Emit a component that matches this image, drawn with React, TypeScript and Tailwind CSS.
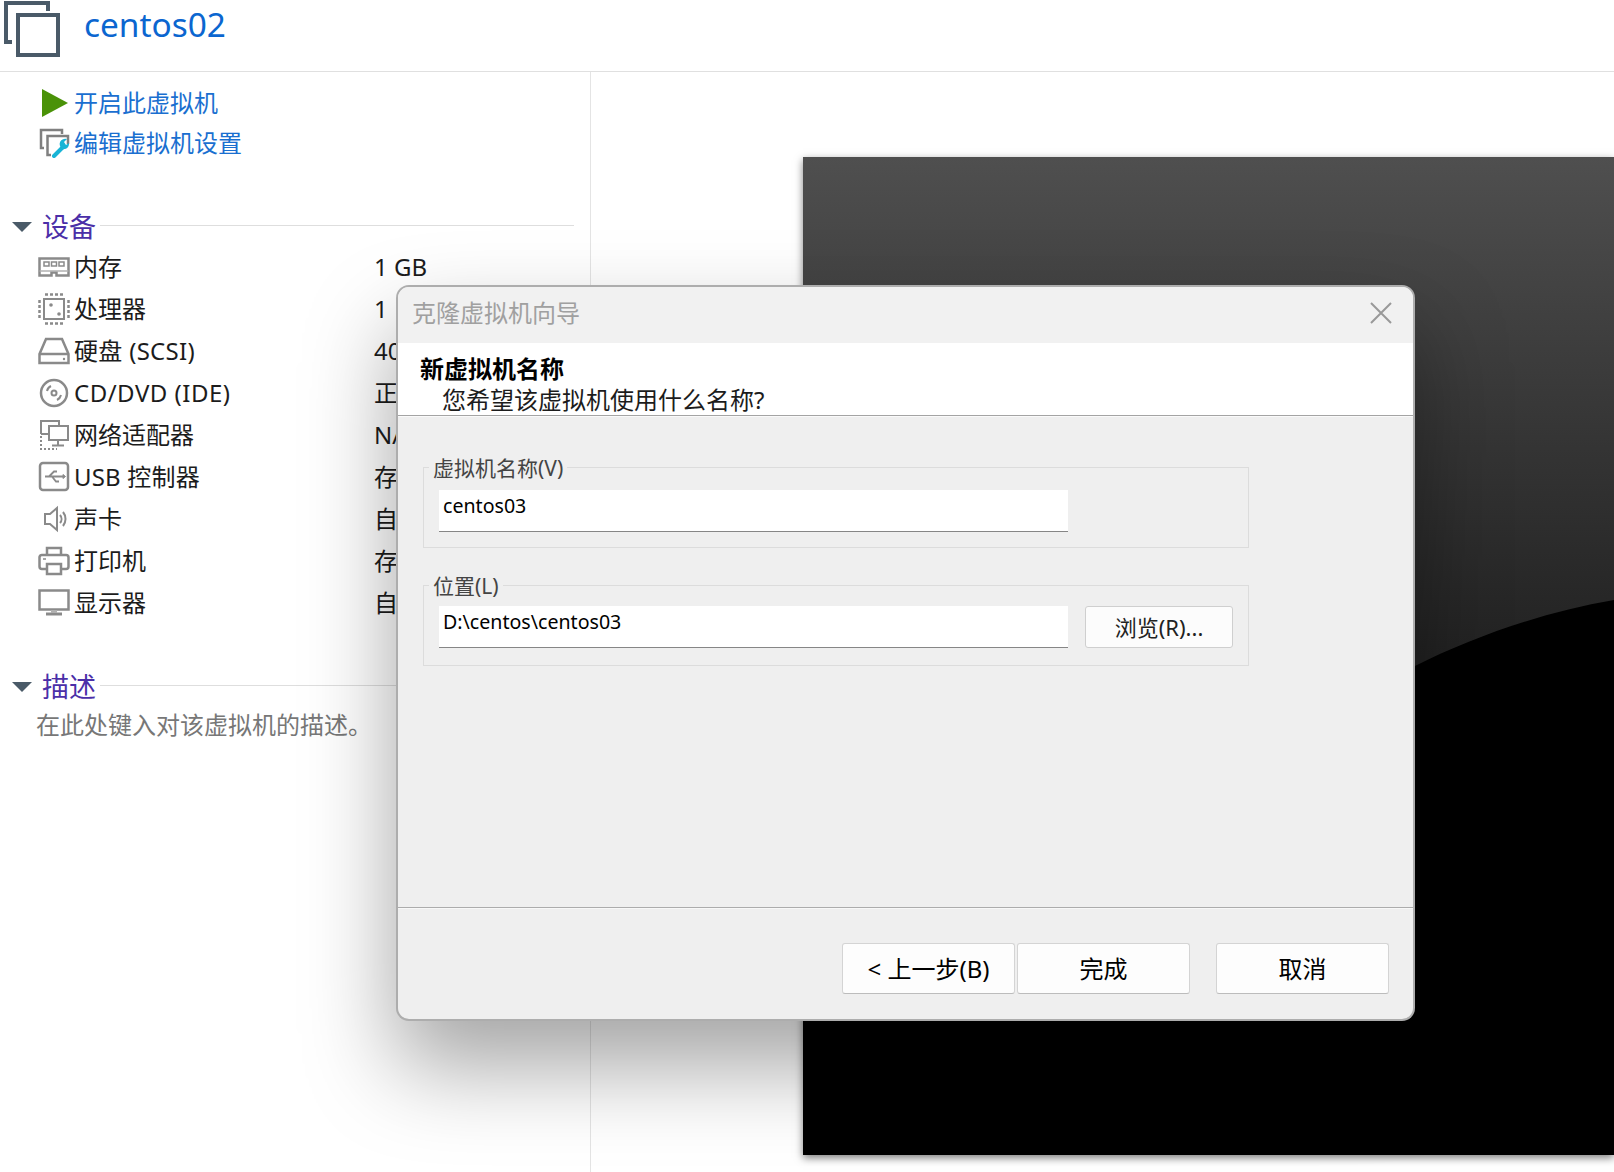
import type { ReactNode } from "react";

const FONT = "font-['Noto_Sans','Noto_Sans_CJK_SC',sans-serif]";

function Ico({ children }: { children: ReactNode }) {
  return (
    <svg width={32} height={32} viewBox="0 0 32 32" fill="none" stroke="#8a8a8a" strokeWidth={2.500}>
      {children}
    </svg>
  );
}

const devices: { label: string; value: string; tracking?: string; icon: ReactNode }[] = [
  {
    label: "内存",
    value: "1 GB",
    icon: (
      <Ico>
        <path d="M1.500 7.500h29v17h-12v-3h-5v3h-12z" />
        <path d="M6 11h5v4H6zM13.500 11h5v4h-5zM21 11h5v4h-5z" strokeWidth={1.500} />
        <path d="M1.500 20h29" strokeWidth={1.500} stroke="#b0b0b0" />
      </Ico>
    ),
  },
  {
    label: "处理器",
    value: "1",
    icon: (
      <Ico>
        <rect x={6} y={6} width={20} height={20} strokeWidth={2} />
        <path d="M7 1.500h18M7 30.500h18M1.500 7v18M30.500 7v18" strokeDasharray="3 2" />
        <circle cx={13} cy={12} r={1.800} fill="#8a8a8a" stroke="none" />
        <circle cx={21} cy={21} r={1.800} fill="#8a8a8a" stroke="none" />
      </Ico>
    ),
  },
  {
    label: "硬盘 (SCSI)",
    value: "40 GB",
    tracking: "tracking-[0.3px]",
    icon: (
      <Ico>
        <path d="M8 4h16l6.500 15v9h-29v-9zM1.500 19h29" />
        <circle cx={26} cy={24} r={1.200} fill="#8a8a8a" stroke="none" />
      </Ico>
    ),
  },
  {
    label: "CD/DVD (IDE)",
    value: "正在使用文件",
    tracking: "tracking-[0.5px]",
    icon: (
      <Ico>
        <circle cx={16} cy={16} r={13} />
        <circle cx={16} cy={16} r={2.500} strokeWidth={2} />
        <path d="M9 14a7.500 7.500 0 0 1 4-5M23 18a7.500 7.500 0 0 1-4 5" strokeWidth={2} />
      </Ico>
    ),
  },
  {
    label: "网络适配器",
    value: "NAT",
    icon: (
      <Ico>
        <path d="M3 15V2h18v5" strokeWidth={2} />
        <path d="M3 15h8" strokeWidth={2} />
        <rect x={11} y={7} width={19} height={14} strokeWidth={2} />
        <path d="M20 21v5M14 26.500h12" strokeWidth={2} />
        <path d="M3 17v13h16" strokeWidth={2} strokeDasharray="2 2" />
      </Ico>
    ),
  },
  {
    label: "USB 控制器",
    value: "存在",
    tracking: "tracking-[0.2px]",
    icon: (
      <Ico>
        <rect x={2} y={2} width={28} height={27} rx={3} />
        <path d="M7 15.500h18M11 15.500l5-5h3M14 15.500l4 5h3" strokeWidth={1.800} />
        <path d="M25 13.500v4l2.500-2z" fill="#8a8a8a" strokeWidth={1} />
      </Ico>
    ),
  },
  {
    label: "声卡",
    value: "自动检测",
    icon: (
      <Ico>
        <path d="M7 11h5l7-6v22l-7-6H7z" strokeWidth={2} />
        <path d="M22 12a6 6 0 0 1 0 8M25 9a11 11 0 0 1 0 14" strokeWidth={2} />
      </Ico>
    ),
  },
  {
    label: "打印机",
    value: "存在",
    icon: (
      <Ico>
        <path d="M9 10V3h14v7M8 24H4a2.500 2.500 0 0 1-2.500-2.500V12A2.500 2.500 0 0 1 4 10h24a2.500 2.500 0 0 1 2.500 2.500v9A2.500 2.500 0 0 1 28 24h-4" />
        <path d="M9 19h14v10H9z" />
        <path d="M5 14h3" strokeWidth={1.500} />
      </Ico>
    ),
  },
  {
    label: "显示器",
    value: "自动检测",
    icon: (
      <Ico>
        <rect x={1.500} y={3.500} width={29} height={19} />
        <path d="M8 27h16" strokeWidth={3} />
        <path d="M13 23h6v3h-6z" fill="#b0b0b0" stroke="none" />
      </Ico>
    ),
  },
];

function SectionHead({ title }: { title: string }) {
  return (
    <div className="flex h-[36px] items-center">
      <div className="ml-[12px] h-0 w-0 border-x-[10px] border-t-[10px] border-x-transparent border-t-[#4a5a68]" />
      <span className="ml-[10px] -translate-y-[1px] text-[27px] leading-none text-[#4b2fa8]">{title}</span>
      <div className="ml-[4px] mr-[16px] h-px flex-1 -translate-y-[2px] bg-[#dedede]" />
    </div>
  );
}

function GroupBox({ label, value, tight, children }: { label: string; value: string; tight?: boolean; children?: ReactNode }) {
  return (
    <div className={`relative flex h-[81px] w-[826px] items-start border border-[#dcdcdc] pl-[15px] ${tight ? "pt-[20px]" : "pt-[22px]"}`}>
      <span className="absolute -top-[13px] left-[5px] bg-[#efefef] px-[4px] text-[21px] leading-[26px] text-[#444]">{label}</span>
      <div className={`h-[42px] w-[629px] border-b border-[#868686] bg-white pl-[4px] text-[19.600px] leading-[31px] text-black`}>{value}</div>
      {children}
    </div>
  );
}

function WizardButton({ label }: { label: string }) {
  return (
    <button className="h-[51px] w-[173px] rounded-[3px] border border-[#d4d4d4] border-b-[#bcbcbc] bg-[#fdfdfd] text-[24px] text-black">
      {label}
    </button>
  );
}

export default function App() {
  return (
    <div className={`relative h-[1172px] w-[1614px] overflow-hidden bg-white ${FONT}`}>
      <header className="flex h-[72px] items-start border-b border-[#e0e0e0]">
        <svg width={64} height={60} viewBox="0 0 64 60" fill="none" stroke="#4a5a68" strokeWidth={4} className="ml-[2px] shrink-0">
          <path d="M10 42H4V3h42v8" />
          <rect x={16} y={15} width={40} height={40} />
        </svg>
        <span className="ml-[18px] mt-[1px] text-[33.400px] leading-[46px] text-[#0b66d0]">centos02</span>
      </header>

      <div className="flex h-[1100px]">
        <aside className="w-[591px] shrink-0 border-r border-[#e4e4e4] pt-[11px]">
          <div className="flex h-[40px] items-center pl-[42px] text-[24px] text-[#1a6fd0]">
            <svg width={26} height={28} viewBox="0 0 26 28" fill="#4a9208">
              <path d="M0 0l26 14L0 28z" />
            </svg>
            <span className="ml-[6px]">开启此虚拟机</span>
          </div>
          <div className="flex h-[40px] items-center pl-[39px] text-[24px] text-[#1a6fd0]">
            <svg width={32} height={30} viewBox="0 0 32 30" fill="none">
              <path d="M5 20H2V2h21v4M12 27H8.500V8H29v8" stroke="#808080" strokeWidth={2.500} />
              <path d="M15 28l9-9" stroke="#18b4d6" strokeWidth={4} strokeLinecap="round" />
              <path d="M21 18a5.500 5.500 0 0 1 7-7l-3 3 2 3 3-2a5.500 5.500 0 0 1-7 6z" fill="#18b4d6" />
            </svg>
            <span className="ml-[3px]">编辑虚拟机设置</span>
          </div>

          <div className="mt-[46px]">
            <SectionHead title="设备" />
          </div>
          <div className="mt-[1px]">
            {devices.map((d) => (
              <div key={d.label} className="grid h-[42px] grid-cols-[36px_300px_1fr] items-center pl-[38px] text-[24px] text-[#1c1c1c]">
                {d.icon}
                <span className={`whitespace-nowrap ${d.tracking ?? ""}`}>{d.label}</span>
                <span className="whitespace-nowrap">{d.value}</span>
              </div>
            ))}
          </div>

          <div className="mt-[45px]">
            <SectionHead title="描述" />
          </div>
          <div className="pl-[36px] text-[24px] leading-[40px] text-[#777]">在此处键入对该虚拟机的描述。</div>
        </aside>

        <main className="min-w-0 flex-1 pl-[212px] pt-[85px]">
          <div className="relative h-[998px] w-[811px] overflow-hidden bg-linear-to-b from-[#4f4f4f] to-[#222222] to-[50%] shadow-[0_3px_8px_rgba(0,0,0,0.5)]">
            <svg width={811} height={998} viewBox="0 0 811 998" className="absolute inset-0">
              <path d="M811 443C740 455 670 480 612 509C400 600 100 700 0 800V998H811Z" fill="#000" />
            </svg>
          </div>
        </main>
      </div>

      <section className="absolute left-[396px] top-[285px] flex h-[736px] w-[1019px] flex-col overflow-hidden rounded-[13px] border-2 border-[#9c9c9c]/80 bg-[#efefef] shadow-[0_45px_90px_rgba(0,0,0,0.36)]">
        <div className="flex h-[56px] shrink-0 items-center justify-between bg-[#f1f1f1] pb-[4px] pl-[14px] pr-[21px]">
          <span className="text-[24px] text-[#a0a0a0]">克隆虚拟机向导</span>
          <svg width={22} height={22} viewBox="0 0 22 22" stroke="#999" strokeWidth={2}>
            <path d="M1 1l20 20M21 1L1 21" />
          </svg>
        </div>
        <div className="h-[73px] shrink-0 border-b border-[#a4a4a4] bg-white pl-[22px]">
          <div className="pt-[11px] text-[24px] font-bold leading-[30px] text-black">新虚拟机名称</div>
          <div className="pl-[22px] text-[24px] leading-[31px] text-[#1c1c1c]">您希望该虚拟机使用什么名称?</div>
        </div>
        <div className="flex h-[492px] shrink-0 flex-col gap-[37px] border-t border-[#fafafa] border-b border-b-[#acacac] pl-[25px] pt-[50px]">
          <GroupBox label="虚拟机名称(V)" value="centos03" />
          <GroupBox label="位置(L)" value="D:\centos\centos03" tight>
            <button className="ml-[17px] h-[42px] w-[148px] rounded-[3px] border border-[#cfcfcf] bg-[#fcfcfc] text-[22px] text-[#222]">浏览(R)...</button>
          </GroupBox>
        </div>
        <div className="flex flex-1 items-start justify-end border-t border-[#f8f8f8] pr-[24px] pt-[34px]">
          <WizardButton label="< 上一步(B)" />
          <div className="ml-[2px]">
            <WizardButton label="完成" />
          </div>
          <div className="ml-[26px]">
            <WizardButton label="取消" />
          </div>
        </div>
      </section>
    </div>
  );
}
